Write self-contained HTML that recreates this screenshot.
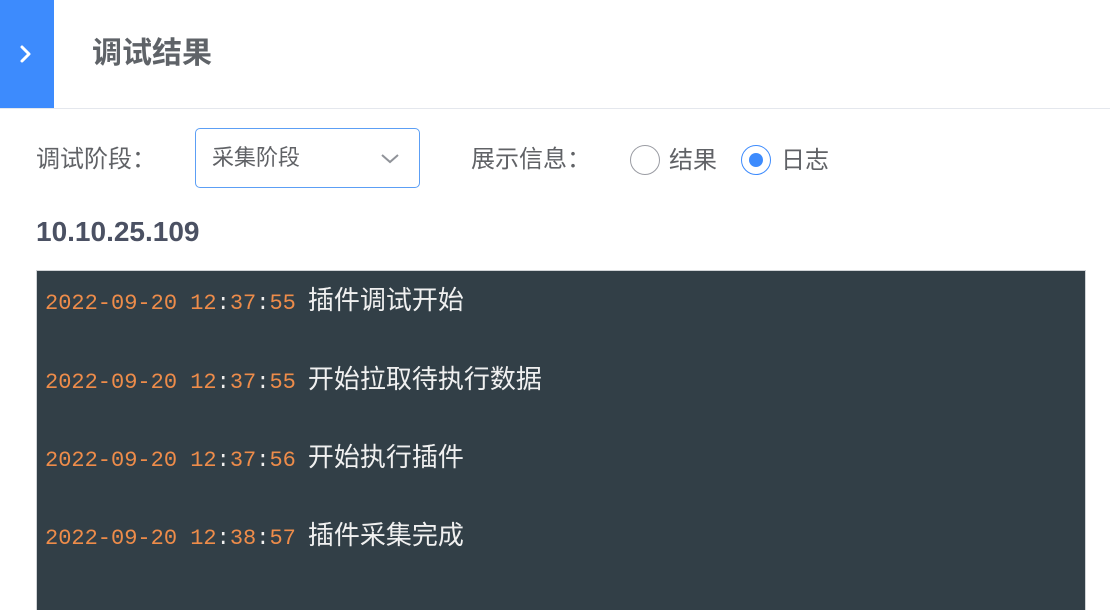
<!DOCTYPE html>
<html><head><meta charset="utf-8"><style>
*{margin:0;padding:0;box-sizing:border-box}
body{width:1110px;height:602px;overflow:hidden;background:#fff;font-family:"Liberation Sans","Noto Sans CJK SC",sans-serif;position:relative}
.hdr{position:absolute;left:0;top:0;width:1110px;height:109px;border-bottom:1px solid #e4e7ed}
.blue{position:absolute;left:0;top:0;width:54px;height:108px;background:#3d8bfd}
.title{position:absolute;left:92px;top:33px;font-size:30px;font-weight:bold;color:#5f6368;line-height:42px}
.lbl{position:absolute;font-size:24px;color:#606266;line-height:32px}
.sel{position:absolute;left:195px;top:128px;width:225px;height:60px;border:1px solid #5c9ff5;border-radius:5px}
.sel span{position:absolute;left:16px;top:14px;font-size:22px;color:#606266;line-height:30px}
.radio{position:absolute;top:145px;width:30px;height:30px;border-radius:50%;border:1px solid #9a9ca3}
.radio.on{border-color:#3d8bfd}
.radio.on:after{content:"";position:absolute;left:7px;top:7px;width:14px;height:14px;border-radius:50%;background:#3d8bfd}
.ip{position:absolute;left:36px;top:213px;font-size:28px;font-weight:bold;color:#4b5163;line-height:38px}
.log{position:absolute;left:36px;top:270px;width:1050px;height:340px;background:#323f47;border:1px solid #d0d3d6;border-bottom:none}
.line{position:absolute;left:8px;font-size:26px;line-height:34px;color:#f0f0f0;white-space:pre}
.t{font-family:"Liberation Mono",monospace;font-size:22px;color:#ee8c4a}
.c{font-family:"Liberation Mono",monospace;font-size:22px;color:#f0f0f0}
.g{display:inline-block;width:12px}
</style></head><body>
<div class="hdr"><div class="blue"><svg width="54" height="108" style="position:absolute;left:0;top:0"><path d="M22 47 L29 54 L22 61" stroke="#fff" stroke-width="3" fill="none" stroke-linecap="round" stroke-linejoin="round"/></svg></div>
<div class="title">调试结果</div></div>
<div class="lbl" style="left:36px;top:144px">调试阶段：</div>
<div class="sel"><span>采集阶段</span><svg width="20" height="12" style="position:absolute;left:184px;top:24px"><path d="M2 2 L10 9 L18 2" stroke="#909399" stroke-width="2" fill="none"/></svg></div>
<div class="lbl" style="left:471px;top:144px">展示信息：</div>
<div class="radio" style="left:630px"></div>
<div class="lbl" style="left:669px;top:145px">结果</div>
<div class="radio on" style="left:741px"></div>
<div class="lbl" style="left:781px;top:145px">日志</div>
<div class="ip">10.10.25.109</div>
<div class="log">
<div class="line" style="top:12px"><span class="t">2022-09-20 12</span><span class="c">:</span><span class="t">37</span><span class="c">:</span><span class="t">55</span><span class="g"></span>插件调试开始</div>
<div class="line" style="top:91px"><span class="t">2022-09-20 12</span><span class="c">:</span><span class="t">37</span><span class="c">:</span><span class="t">55</span><span class="g"></span>开始拉取待执行数据</div>
<div class="line" style="top:169px"><span class="t">2022-09-20 12</span><span class="c">:</span><span class="t">37</span><span class="c">:</span><span class="t">56</span><span class="g"></span>开始执行插件</div>
<div class="line" style="top:247px"><span class="t">2022-09-20 12</span><span class="c">:</span><span class="t">38</span><span class="c">:</span><span class="t">57</span><span class="g"></span>插件采集完成</div>
</div>
</body></html>
